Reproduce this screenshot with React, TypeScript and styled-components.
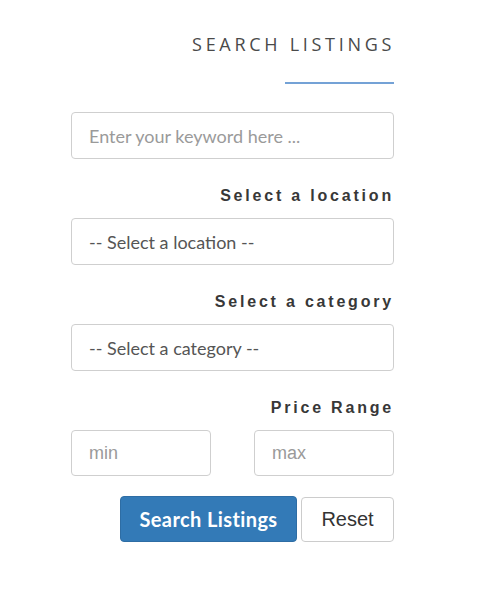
import styled, { createGlobalStyle } from 'styled-components';

const GlobalStyle = createGlobalStyle`
  body {
    margin: 0;
    background: #fff;
    font-family: Lato, "Liberation Sans", sans-serif;
  }
`;

const Panel = styled.form`
  width: 323px;
  margin-left: 71px;
  padding-top: 31px;
  display: flex;
  flex-direction: column;
`;

const Title = styled.h2`
  margin: 0 -1px 0 0;
  text-align: right;
  font-family: "Open Sans", sans-serif;
  font-weight: 400;
  font-size: 18px;
  letter-spacing: 3.7px;
  color: #4a4a4a;
  line-height: 26px;
`;

const Rule = styled.div`
  align-self: flex-end;
  width: 109px;
  height: 2px;
  background: #74a2d6;
  margin: 25px 0 28px;
`;

const Field = styled.input<{ $small?: boolean }>`
  box-sizing: border-box;
  width: ${(p) => (p.$small ? '140px' : '100%')};
  height: ${(p) => (p.$small ? '46px' : '47px')};
  padding: 0 17px;
  border: 1px solid #cfcfcf;
  border-radius: 4px;
  font-family: ${(p) => (p.$small ? '"Liberation Sans", Arial' : 'Lato, "Liberation Sans"')}, sans-serif;
  font-size: 18px;
  color: #555;
  outline: none;
  &::placeholder {
    color: #9a9a9a;
  }
`;

const Select = styled.select`
  box-sizing: border-box;
  width: 100%;
  height: 47px;
  padding: 0 17px;
  border: 1px solid #cfcfcf;
  border-radius: 4px;
  background: #fff;
  font-family: Lato, "Liberation Sans", sans-serif;
  font-size: 18px;
  color: #555;
  appearance: none;
  outline: none;
`;

const Label = styled.label`
  display: block;
  text-align: right;
  margin: 27px 0 12px;
  font-family: "Liberation Sans", Arial, sans-serif;
  font-weight: 700;
  font-size: 16px;
  letter-spacing: 2.8px;
  color: #383838;
  line-height: 20px;
`;

const PriceRow = styled.div`
  display: flex;
  justify-content: space-between;
`;

const Actions = styled.div`
  display: flex;
  justify-content: flex-end;
  align-items: center;
  gap: 4px;
  margin-top: 20px;
`;

const Button = styled.button<{ $primary?: boolean }>`
  box-sizing: border-box;
  border-radius: 4px;
  cursor: pointer;
  padding: 0;
  ${(p) =>
    p.$primary
      ? `
    width: 177px;
    height: 46px;
    background: #337ab7;
    border: 1px solid #2e6da4;
    color: #fff;
    font-family: Lato, "Liberation Sans", sans-serif;
    font-weight: 700;
    font-size: 20px;
    letter-spacing: 0.4px;
  `
      : `
    width: 93px;
    height: 45px;
    background: #fff;
    border: 1px solid #ccc;
    color: #333;
    font-family: "Liberation Sans", Arial, sans-serif;
    font-size: 20px;
  `}
`;

export default function App() {
  return (
    <>
      <GlobalStyle />
      <Panel onSubmit={(e) => e.preventDefault()}>
        <Title>SEARCH LISTINGS</Title>
        <Rule />
        <Field placeholder="Enter your keyword here ..." />

        <Label>Select a location</Label>
        <Select defaultValue="">
          <option value="">-- Select a location --</option>
        </Select>

        <Label>Select a category</Label>
        <Select defaultValue="">
          <option value="">-- Select a category --</option>
        </Select>

        <Label>Price Range</Label>
        <PriceRow>
          <Field $small placeholder="min" />
          <Field $small placeholder="max" />
        </PriceRow>

        <Actions>
          <Button $primary type="submit">Search Listings</Button>
          <Button type="reset">Reset</Button>
        </Actions>
      </Panel>
    </>
  );
}
